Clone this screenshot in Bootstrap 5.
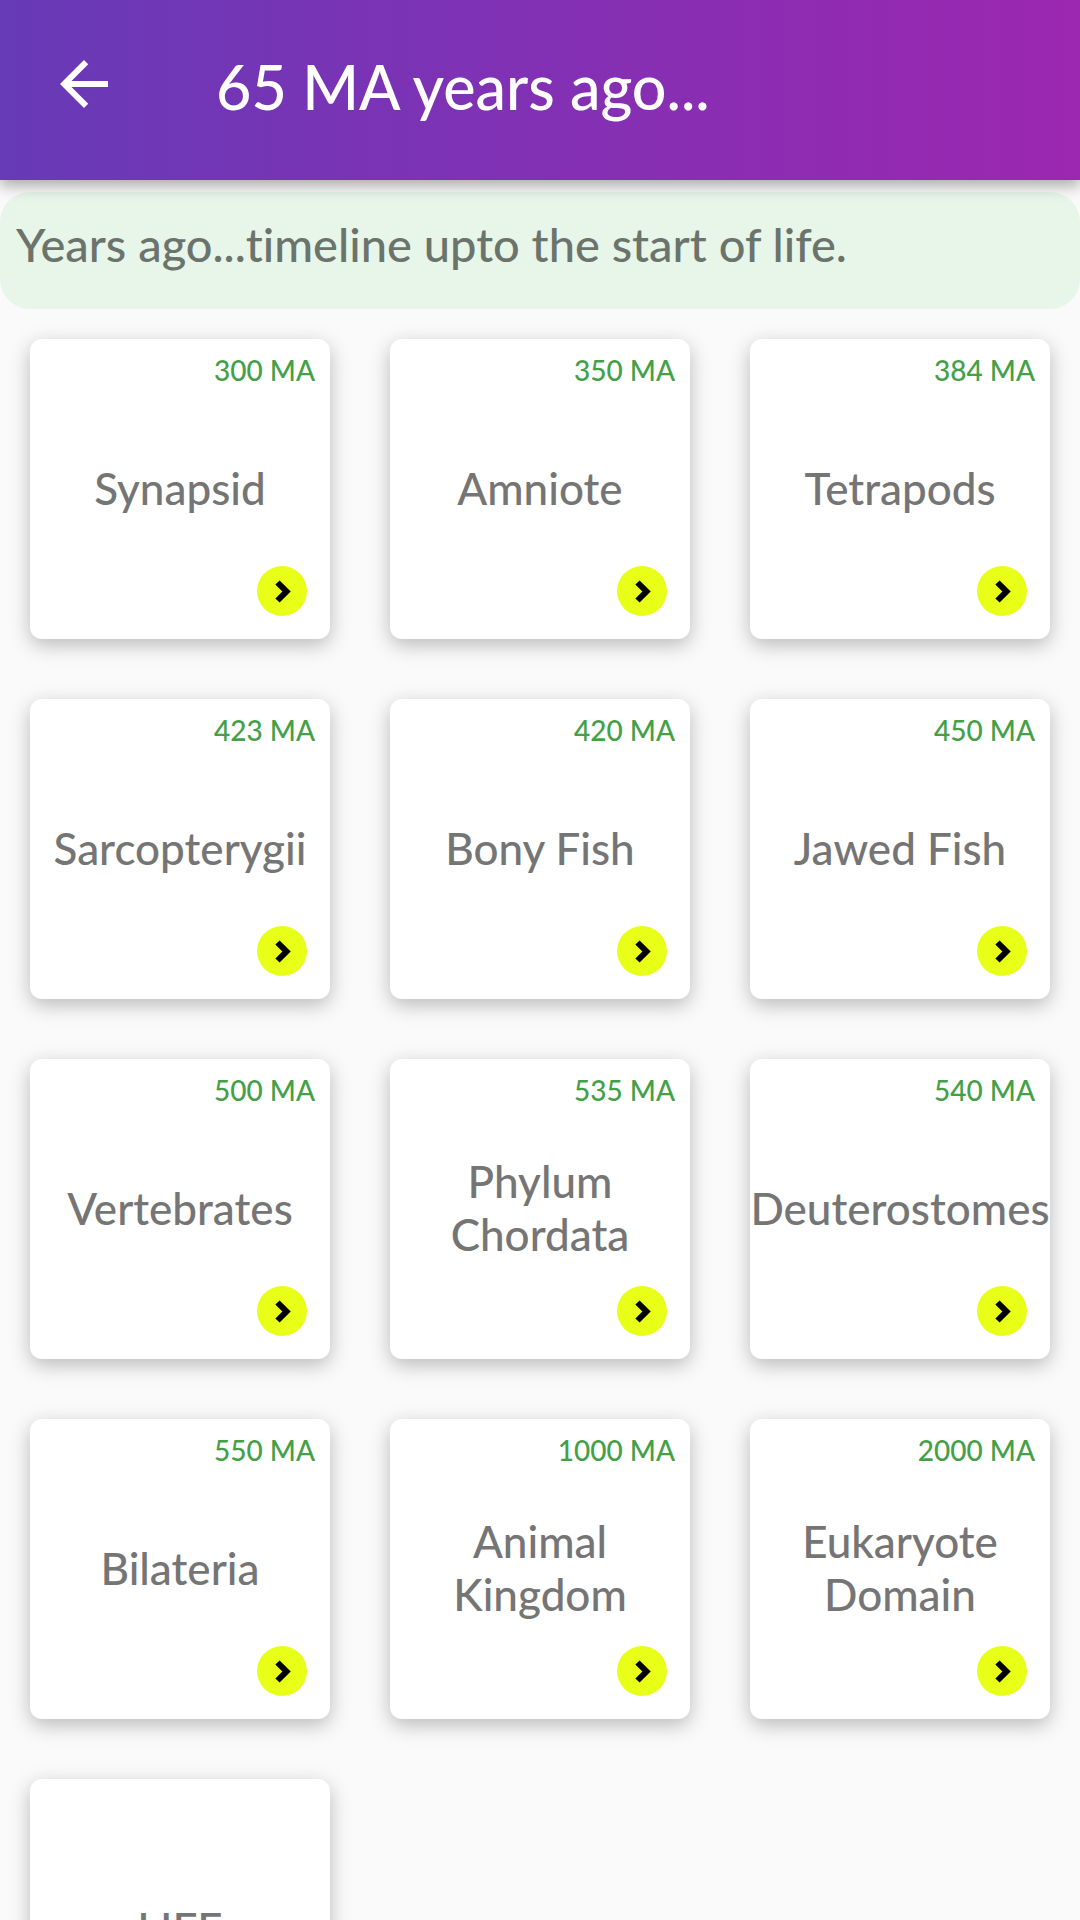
<!DOCTYPE html>
<html lang="en">
<head>
<meta charset="utf-8">
<meta name="viewport" content="width=device-width, initial-scale=1">
<title>65 MA years ago...</title>
<link href="https://cdn.jsdelivr.net/npm/bootstrap@5.3.0/dist/css/bootstrap.min.css" rel="stylesheet">
<style>
body { font-family: Lato, "Open Sans", sans-serif; font-weight: 500; font-variant-ligatures: none; background: #fafafa; color: #757575; }
.app-bar { height: 180px; padding: 0 48px 12px; background: linear-gradient(90deg, #673ab7, #9c27b0); box-shadow: 0 6px 14px rgba(0,0,0,.32); z-index: 2; }
.back-btn { width: 72px; height: 72px; }
.app-title { font-size: 61px; line-height: 76px; margin-left: 96px; padding-top: 6px; font-weight: 500; }
.scroll-area { min-height: 0; overflow-y: auto; scrollbar-width: none; }
.intro { margin-top: 12px; padding: 19px 16px 32px; border-radius: 30px; background: #e8f5e9; color: #6b746c; font-size: 47px; line-height: 66px; }
.era-grid { padding: 30px; }
.era-row { --bs-gutter-x: 60px; --bs-gutter-y: 60px; }
.era-card { aspect-ratio: 1; border: 0; border-radius: 12px; background: #fff; color: #757575; box-shadow: 0 6px 20px rgba(0,0,0,.26); }
.era-age, .era-foot { flex: 0 0 84px; }
.era-age { padding: 13px 15px 0; font-size: 28px; line-height: 36px; color: #43a047; }
.era-name { font-size: 44px; line-height: 53px; padding-bottom: 2px; }
.era-foot { padding: 0 23px 23px; }
</style>
<script src="https://cdn.jsdelivr.net/npm/bootstrap@5.3.0/dist/js/bootstrap.bundle.min.js"></script>
</head>
<body class="vh-100 overflow-hidden d-flex flex-column">
<svg class="d-none">
  <symbol id="go" viewBox="0 0 50 50"><circle cx="25" cy="25" r="25" fill="#e8ff17"/><path d="M20.500 16.500 29.500 25.500 20.500 34.500" fill="none" stroke="#000" stroke-width="6"/></symbol>
</svg>
<header class="app-bar position-relative flex-shrink-0 d-flex align-items-center text-white">
  <button type="button" class="back-btn btn p-0 border-0 text-white flex-shrink-0 d-flex" aria-label="Back">
    <svg width="72" height="72" viewBox="0 0 24 24" fill="currentColor"><path d="M20 11H7.830l5.590-5.590L12 4l-8 8 8 8 1.410-1.410L7.830 13H20z"/></svg>
  </button>
  <h1 class="app-title mb-0">65 MA years ago...</h1>
</header>
<main class="scroll-area flex-grow-1">
  <p class="intro mb-0">Years ago...timeline upto the start of life.</p>
  <div class="era-grid"><div class="era-row row row-cols-3" id="eras"></div></div>
</main>
<script>
const eras = [["300 MA","Synapsid"],["350 MA","Amniote"],["384 MA","Tetrapods"],["423 MA","Sarcopterygii"],["420 MA","Bony Fish"],["450 MA","Jawed Fish"],["500 MA","Vertebrates"],["535 MA","Phylum Chordata"],["540 MA","Deuterostomes"],["550 MA","Bilateria"],["1000 MA","Animal Kingdom"],["2000 MA","Eukaryote Domain"],["","LIFE"]];
document.getElementById("eras").innerHTML = eras.map(([age, name]) => `
  <div class="col"><a href="#" class="era-card card text-decoration-none">
    <span class="era-age text-end">${age}</span>
    <span class="era-name flex-grow-1 d-flex align-items-center justify-content-center text-center">${name}</span>
    <span class="era-foot d-flex align-items-end justify-content-end"><svg width="50" height="50" aria-hidden="true"><use href="#go"/></svg></span>
  </a></div>`).join("");
</script>
</body>
</html>
